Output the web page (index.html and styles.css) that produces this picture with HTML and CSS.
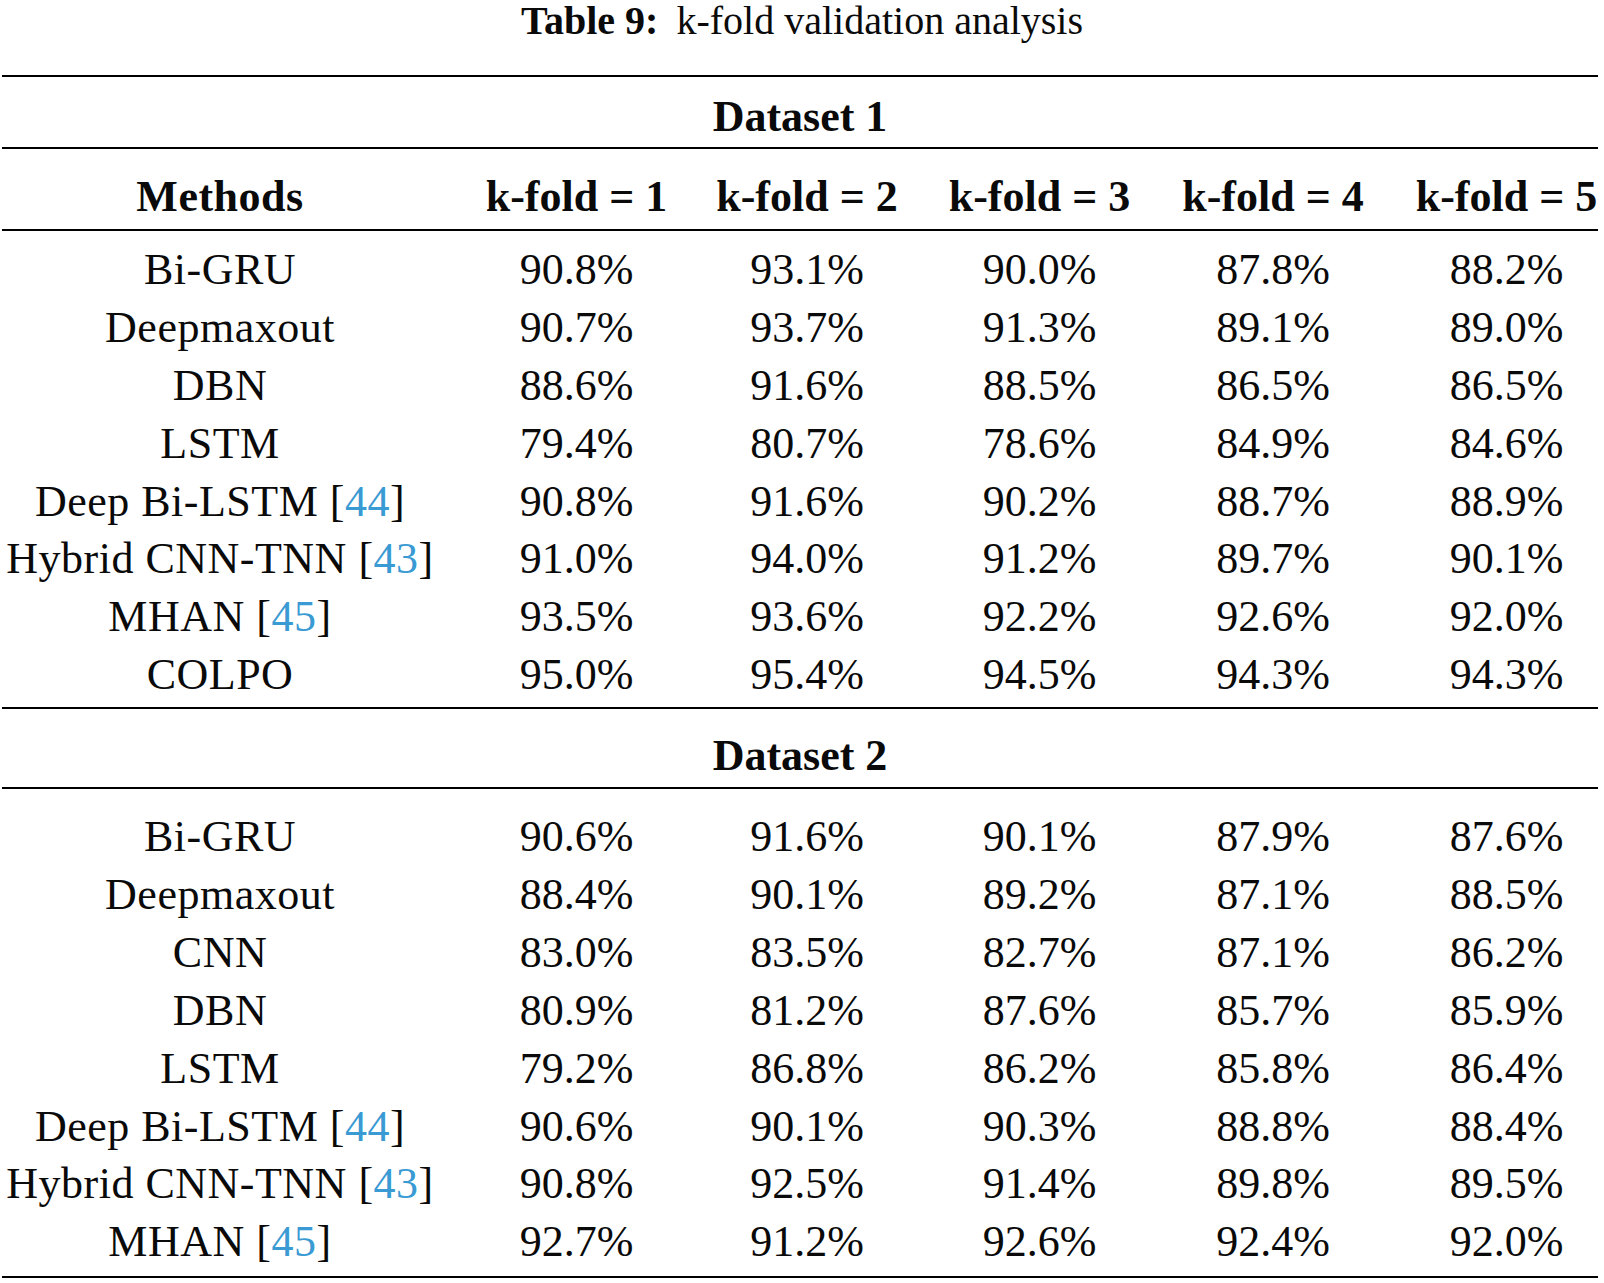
FILE: index.html
```html
<!DOCTYPE html>
<html lang="en">
<head>
<meta charset="utf-8">
<title>Table 9: k-fold validation analysis</title>
<link rel="stylesheet" href="styles.css">
</head>
<body>
<div class="caption"><b class="caption-label">Table 9:</b> <span class="caption-text">k-fold validation analysis</span></div>
<div class="table" role="table">
  <div class="rule"></div>
  <div class="group-title g1" role="row">Dataset 1</div>
  <div class="rule"></div>
  <div class="row head" role="row">
    <div class="cell first">Methods</div>
    <div class="cell">k-fold = 1</div>
    <div class="cell">k-fold = 2</div>
    <div class="cell">k-fold = 3</div>
    <div class="cell">k-fold = 4</div>
    <div class="cell last">k-fold = 5</div>
  </div>
  <div class="rule"></div>
  <div class="body b1">
    <div class="row" role="row"><div class="cell first">Bi-GRU</div><div class="cell">90.8%</div><div class="cell">93.1%</div><div class="cell">90.0%</div><div class="cell">87.8%</div><div class="cell last">88.2%</div></div>
    <div class="row" role="row"><div class="cell first">Deepmaxout</div><div class="cell">90.7%</div><div class="cell">93.7%</div><div class="cell">91.3%</div><div class="cell">89.1%</div><div class="cell last">89.0%</div></div>
    <div class="row" role="row"><div class="cell first">DBN</div><div class="cell">88.6%</div><div class="cell">91.6%</div><div class="cell">88.5%</div><div class="cell">86.5%</div><div class="cell last">86.5%</div></div>
    <div class="row" role="row"><div class="cell first">LSTM</div><div class="cell">79.4%</div><div class="cell">80.7%</div><div class="cell">78.6%</div><div class="cell">84.9%</div><div class="cell last">84.6%</div></div>
    <div class="row" role="row"><div class="cell first">Deep Bi-LSTM [<span class="ref">44</span>]</div><div class="cell">90.8%</div><div class="cell">91.6%</div><div class="cell">90.2%</div><div class="cell">88.7%</div><div class="cell last">88.9%</div></div>
    <div class="row" role="row"><div class="cell first">Hybrid CNN-TNN [<span class="ref">43</span>]</div><div class="cell">91.0%</div><div class="cell">94.0%</div><div class="cell">91.2%</div><div class="cell">89.7%</div><div class="cell last">90.1%</div></div>
    <div class="row" role="row"><div class="cell first">MHAN [<span class="ref">45</span>]</div><div class="cell">93.5%</div><div class="cell">93.6%</div><div class="cell">92.2%</div><div class="cell">92.6%</div><div class="cell last">92.0%</div></div>
    <div class="row" role="row"><div class="cell first">COLPO</div><div class="cell">95.0%</div><div class="cell">95.4%</div><div class="cell">94.5%</div><div class="cell">94.3%</div><div class="cell last">94.3%</div></div>
  </div>
  <div class="rule"></div>
  <div class="group-title g2" role="row">Dataset 2</div>
  <div class="rule"></div>
  <div class="body b2">
    <div class="row" role="row"><div class="cell first">Bi-GRU</div><div class="cell">90.6%</div><div class="cell">91.6%</div><div class="cell">90.1%</div><div class="cell">87.9%</div><div class="cell last">87.6%</div></div>
    <div class="row" role="row"><div class="cell first">Deepmaxout</div><div class="cell">88.4%</div><div class="cell">90.1%</div><div class="cell">89.2%</div><div class="cell">87.1%</div><div class="cell last">88.5%</div></div>
    <div class="row" role="row"><div class="cell first">CNN</div><div class="cell">83.0%</div><div class="cell">83.5%</div><div class="cell">82.7%</div><div class="cell">87.1%</div><div class="cell last">86.2%</div></div>
    <div class="row" role="row"><div class="cell first">DBN</div><div class="cell">80.9%</div><div class="cell">81.2%</div><div class="cell">87.6%</div><div class="cell">85.7%</div><div class="cell last">85.9%</div></div>
    <div class="row" role="row"><div class="cell first">LSTM</div><div class="cell">79.2%</div><div class="cell">86.8%</div><div class="cell">86.2%</div><div class="cell">85.8%</div><div class="cell last">86.4%</div></div>
    <div class="row" role="row"><div class="cell first">Deep Bi-LSTM [<span class="ref">44</span>]</div><div class="cell">90.6%</div><div class="cell">90.1%</div><div class="cell">90.3%</div><div class="cell">88.8%</div><div class="cell last">88.4%</div></div>
    <div class="row" role="row"><div class="cell first">Hybrid CNN-TNN [<span class="ref">43</span>]</div><div class="cell">90.8%</div><div class="cell">92.5%</div><div class="cell">91.4%</div><div class="cell">89.8%</div><div class="cell last">89.5%</div></div>
    <div class="row" role="row"><div class="cell first">MHAN [<span class="ref">45</span>]</div><div class="cell">92.7%</div><div class="cell">91.2%</div><div class="cell">92.6%</div><div class="cell">92.4%</div><div class="cell last">92.0%</div></div>
  </div>
  <div class="rule"></div>
</div>
</body>
</html>
```

FILE: styles.css
```css
html, body {
  margin: 0;
  padding: 0;
  background: #ffffff;
}

body {
  width: 1604px;
  font-family: "Liberation Serif", "Times New Roman", serif;
  color: #0a0a0a;
}

.caption {
  height: 75px;
  line-height: 42px;
  font-size: 40px;
  text-align: center;
}

.caption-label {
  font-weight: bold;
  margin-right: 8px;
}

.table {
  margin-left: 2px;
  width: 1596px;
  font-size: 44px;
}

.rule {
  height: 2px;
  background: #000;
}

.group-title {
  text-align: center;
  font-weight: bold;
}

.g1 {
  height: 70px;
  padding-top: 9px;
  line-height: 61px;
  box-sizing: border-box;
}

.g2 {
  height: 78px;
  padding-top: 16px;
  line-height: 62px;
  box-sizing: border-box;
}

.row {
  display: grid;
  grid-template-columns: 460px 229px 232px 233px 234px 208px;
  height: 57.9px;
  line-height: 57.9px;
}

.head {
  height: 80px;
  padding-top: 16px;
  line-height: 63px;
  box-sizing: border-box;
  font-weight: bold;
}

.cell {
  text-align: center;
  white-space: nowrap;
}

.cell.first {
  padding-right: 26px;
  padding-left: 2px;
  letter-spacing: 0.5px;
}

.cell.last {
  padding-left: 25px;
}

.b1 {
  padding-top: 10px;
  padding-bottom: 3px;
}

.b2 {
  padding-top: 19px;
  padding-bottom: 5px;
}

.ref {
  color: #3a9ad3;
}
```
